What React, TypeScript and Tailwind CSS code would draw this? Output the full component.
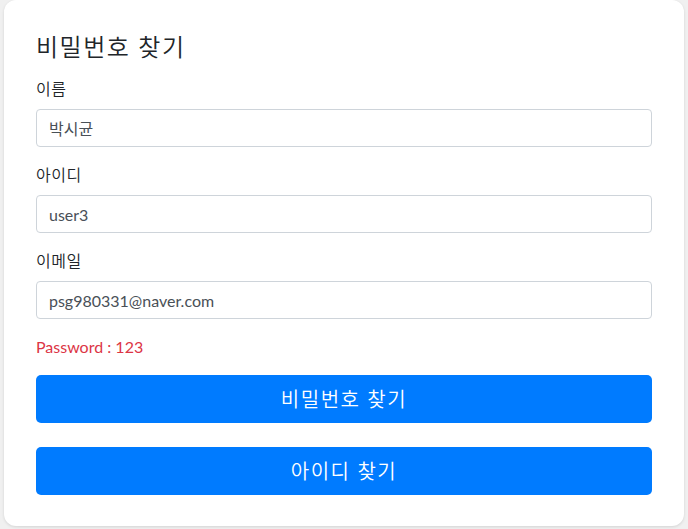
import React from "react";

const font = { fontFamily: 'Lato, "Noto Sans CJK KR", sans-serif' };

function Field({ label, value }: { label: string; value: string }) {
  return (
    <div className="mb-4">
      <label className="block mb-2 text-[16px] leading-[24px] text-[#212529] tracking-[0.5px] font-[350]">{label}</label>
      <input
        readOnly
        value={value}
        className="block w-full h-[38px] px-3 border border-[#ced4da] rounded-[4px] text-[16px] text-[#495057] bg-white outline-none"
        style={font}
      />
    </div>
  );
}

export default function App() {
  return (
    <div className="min-h-[529px] w-full bg-[#f0f0f0] pt-0 px-1 pb-[3px]" style={font}>
      <div className="bg-white rounded-[12px] shadow-[0_1px_3px_rgba(0,0,0,0.12)] px-8 pt-8 pb-[31px] h-[526px]">
        <h4 className="text-[24px] leading-[29px] mb-4 text-[#212529] font-[350] tracking-[1.5px]">비밀번호 찾기</h4>
        <Field label="이름" value="박시균" />
        <Field label="아이디" value="user3" />
        <Field label="이메일" value="psg980331@naver.com" />
        <div className="text-[#dc3545] text-[16px] leading-[24px] mb-4">Password : 123</div>
        <button className="block w-full h-[48px] bg-[#007bff] text-white text-[20px] rounded-[5px] mb-6 font-[350] tracking-[1.5px]">
          비밀번호 찾기
        </button>
        <button className="block w-full h-[48px] bg-[#007bff] text-white text-[20px] rounded-[5px] font-[350] tracking-[1.5px]">
          아이디 찾기
        </button>
      </div>
    </div>
  );
}
